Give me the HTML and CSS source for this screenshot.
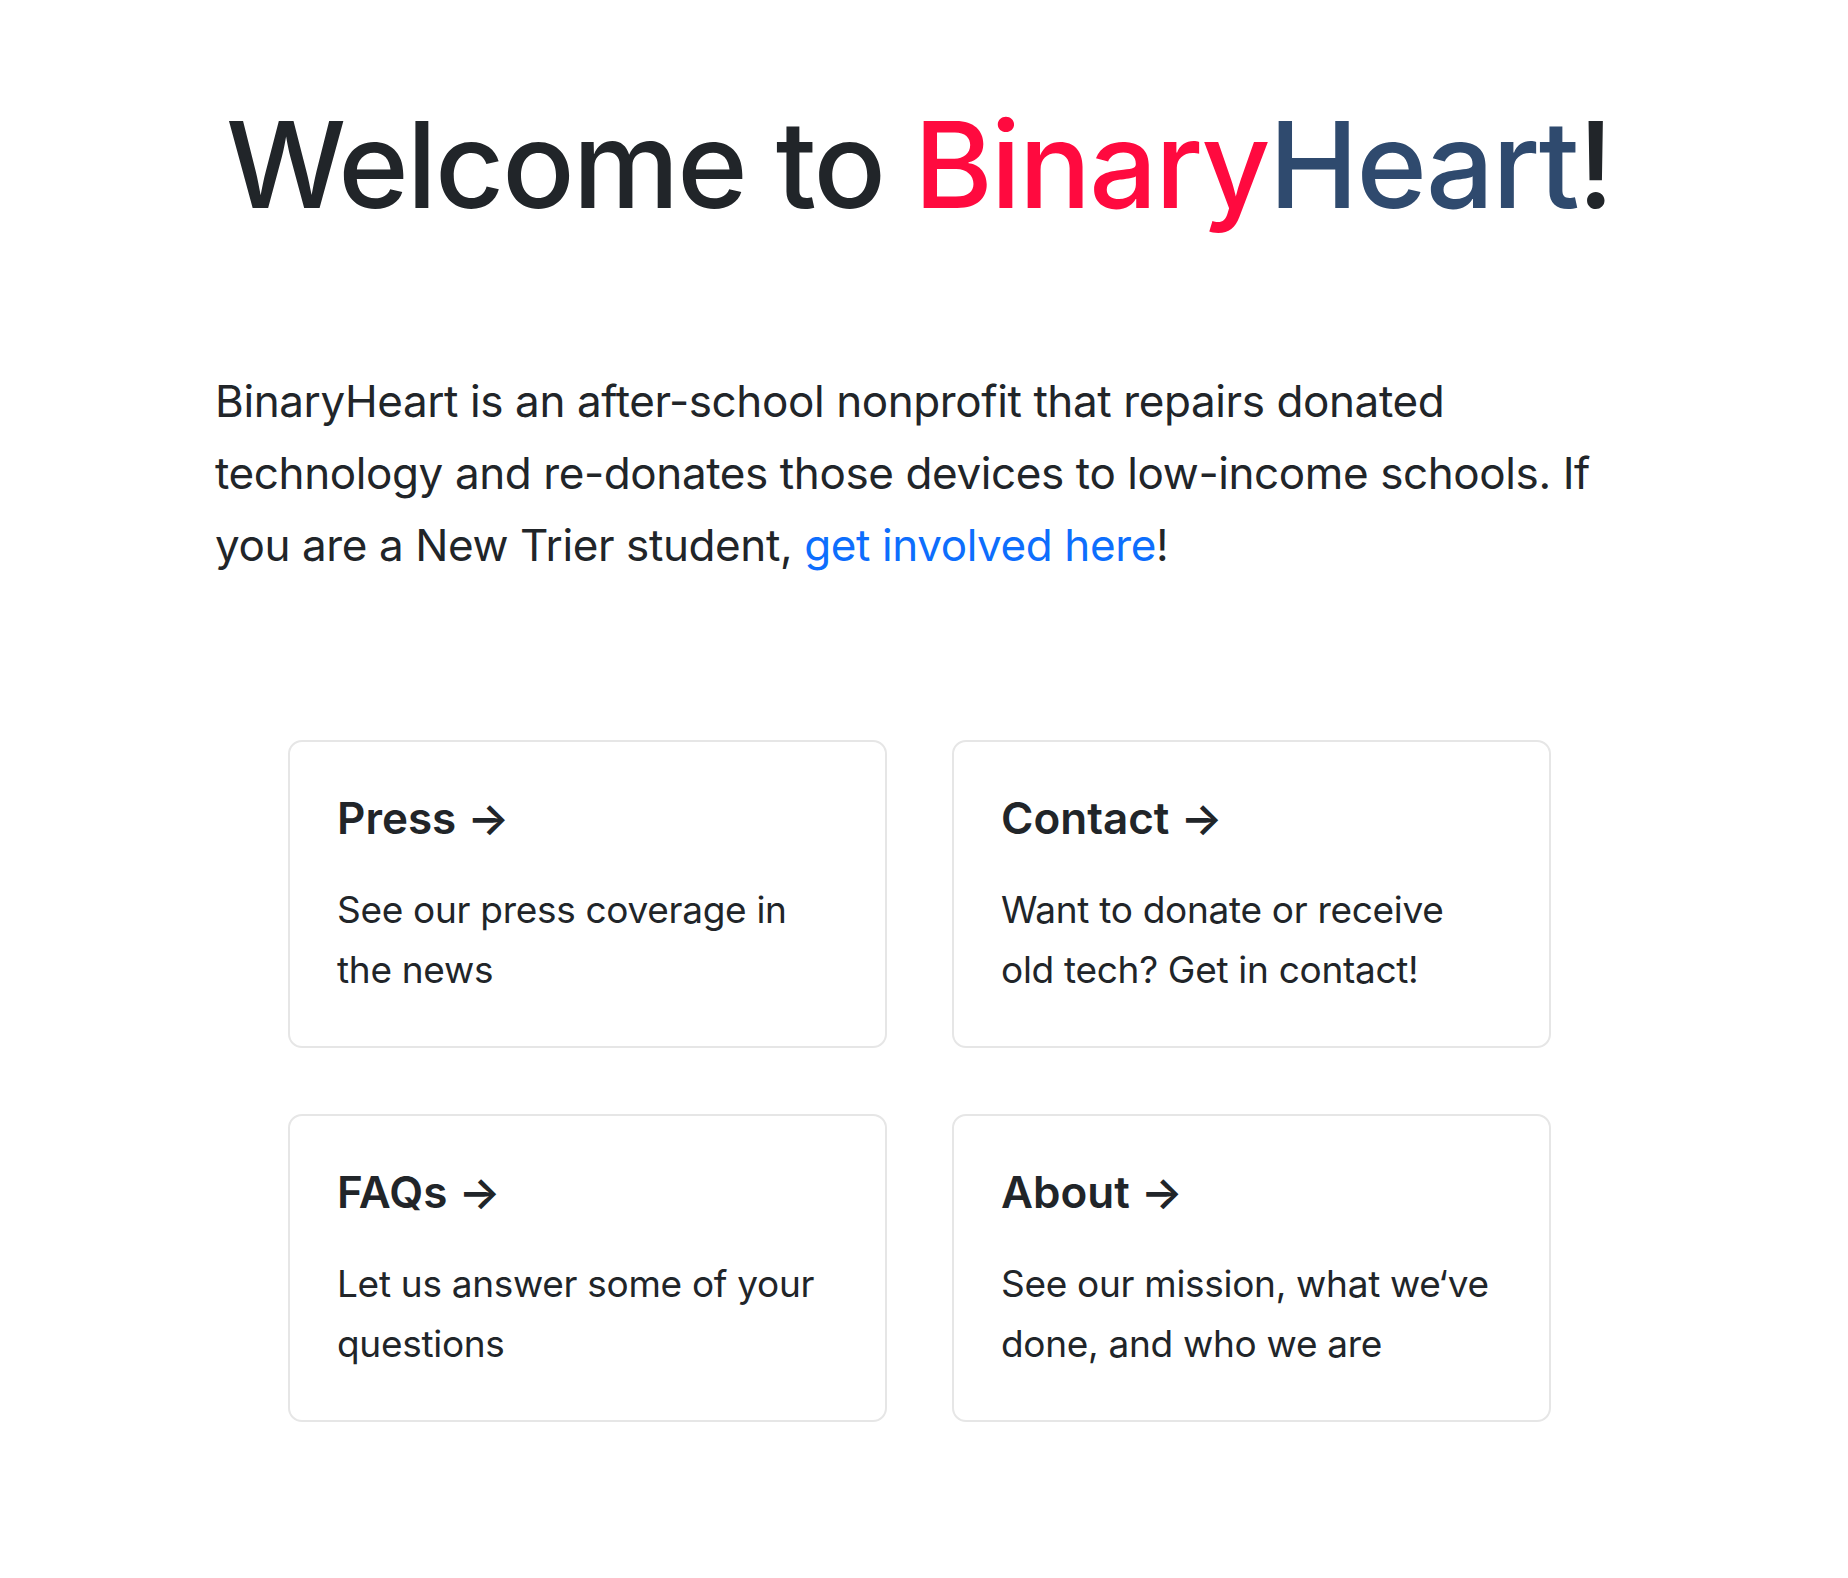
FILE: index.html
```html
<!DOCTYPE html>
<html lang="en">
<head>
<meta charset="utf-8">
<title>BinaryHeart</title>
<link rel="stylesheet" href="styles.css">
</head>
<body>
<main class="page">
  <h1 class="title">Welcome to <span class="binary">Binary</span><span class="heart">Heart</span>!</h1>
  <p class="intro">BinaryHeart is an after-school nonprofit that repairs donated technology and re-donates those devices to low-income schools. If you are a New Trier student, <a class="link" href="#">get involved here</a>!</p>
  <div class="cards">
    <a class="card" href="#">
      <h3 class="card-title">Press →</h3>
      <p class="card-text">See our press coverage in the news</p>
    </a>
    <a class="card" href="#">
      <h3 class="card-title">Contact →</h3>
      <p class="card-text">Want to donate or receive old tech? Get in contact!</p>
    </a>
    <a class="card" href="#">
      <h3 class="card-title">FAQs →</h3>
      <p class="card-text">Let us answer some of your questions</p>
    </a>
    <a class="card" href="#">
      <h3 class="card-title">About →</h3>
      <p class="card-text">See our mission, what we‘ve done, and who we are</p>
    </a>
  </div>
</main>
</body>
</html>
```
FILE: styles.css
```css
html, body {
  margin: 0;
  padding: 0;
  background: #ffffff;
}
body {
  padding-right: 10px;
  font-family: Inter, "Noto Sans", "Liberation Sans", sans-serif;
  color: #212529;
}
.page {
  width: 1408px;
  margin: 0 auto;
  padding-top: 90px;
}
.title {
  margin: 0;
  text-align: center;
  white-space: nowrap;
  font-size: 120px;
  font-weight: 500;
  line-height: 150px;
  letter-spacing: -2px;
  color: #212529;
}
.binary { color: #ff0a3f; }
.heart { color: #2f4a6e; }
.intro {
  margin: 125px 0 0 0;
  font-size: 44px;
  line-height: 72px;
  font-weight: 400;
  letter-spacing: -0.4px;
}
.link {
  color: #0d6efd;
  text-decoration: none;
}
.cards {
  margin: 159px 72px 0 73px;
  display: grid;
  grid-template-columns: 1fr 1fr;
  column-gap: 65px;
  row-gap: 66px;
}
.card {
  display: block;
  border: 2px solid #e6e6e6;
  border-radius: 14px;
  padding: 52px 47px 46px 47px;
  color: #212529;
  text-decoration: none;
  height: 308px;
  box-sizing: border-box;
}
.card-title {
  margin: 0;
  font-size: 44px;
  line-height: 49px;
  font-weight: 600;
  letter-spacing: 0;
}
.card-text {
  margin: 37px 0 0 0;
  font-size: 37px;
  line-height: 60px;
  letter-spacing: -0.3px;
}
```
